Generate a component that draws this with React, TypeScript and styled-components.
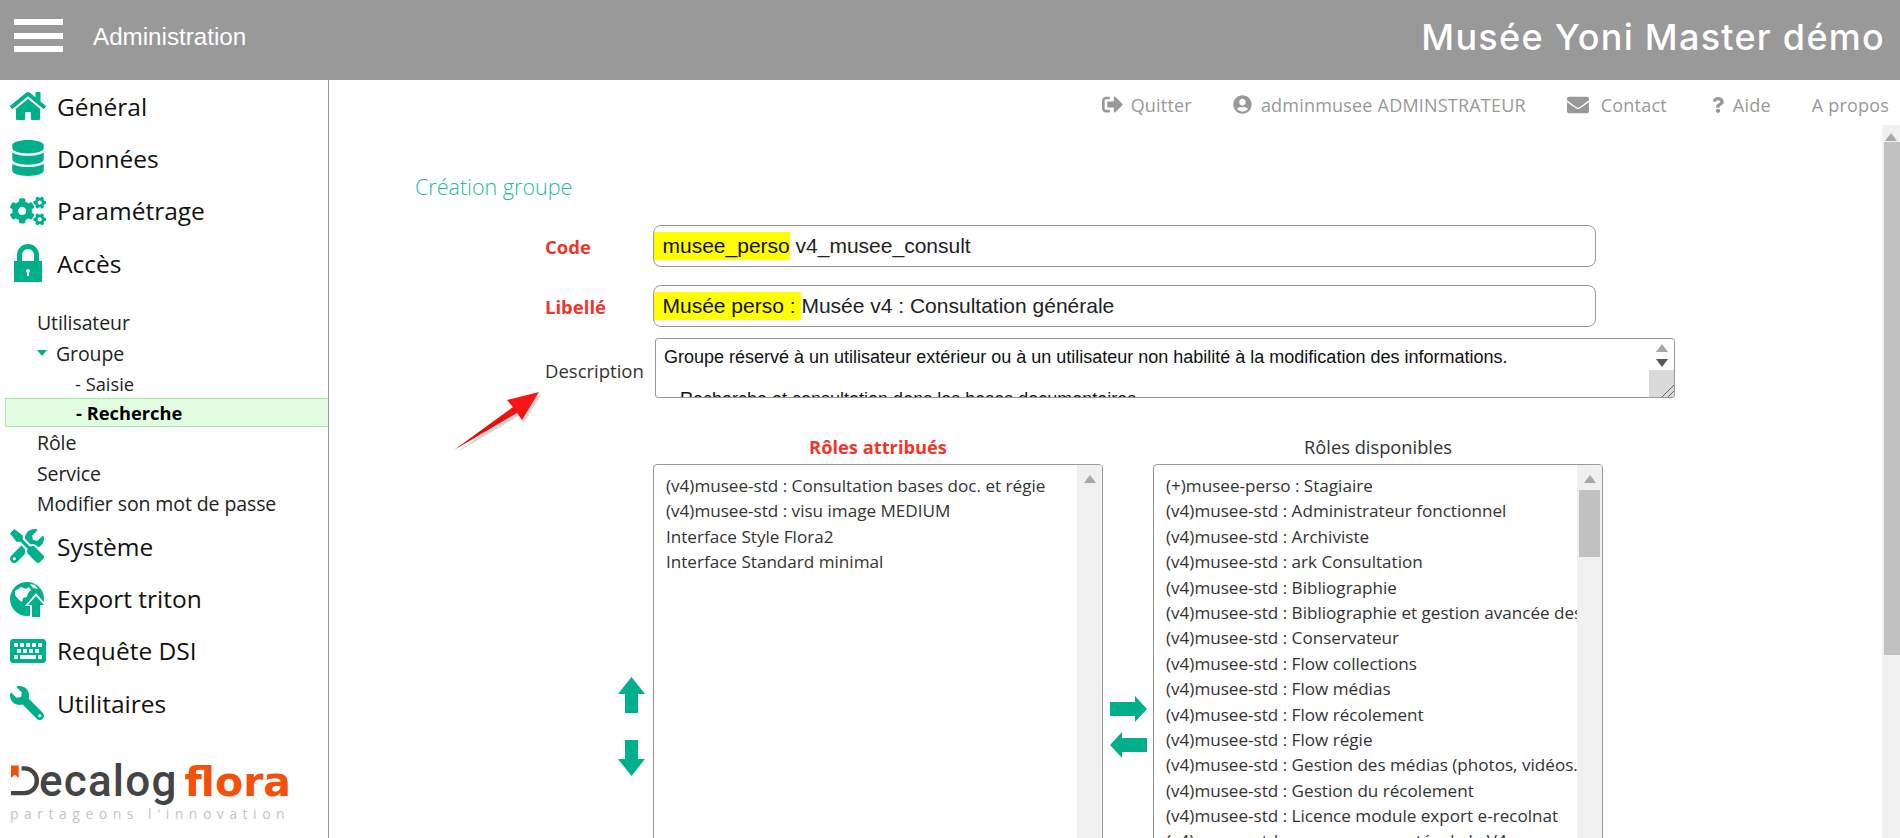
import React from "react";
import styled, { createGlobalStyle } from "styled-components";
import {
  FaHome,
  FaDatabase,
  FaCogs,
  FaTools,
  FaKeyboard,
  FaWrench,
  FaSignOutAlt,
  FaUserCircle,
  FaEnvelope,
  FaQuestion,
} from "react-icons/fa";

const TEAL = "#00b08c";
const SEGOE = `"Open Sans", "Noto Sans", sans-serif`;

const assigned = [
  "(v4)musee-std : Consultation bases doc. et régie",
  "(v4)musee-std : visu image MEDIUM",
  "Interface Style Flora2",
  "Interface Standard minimal",
];

const available = [
  "(+)musee-perso : Stagiaire",
  "(v4)musee-std : Administrateur fonctionnel",
  "(v4)musee-std : Archiviste",
  "(v4)musee-std : ark Consultation",
  "(v4)musee-std : Bibliographie",
  "(v4)musee-std : Bibliographie et gestion avancée des autorités",
  "(v4)musee-std : Conservateur",
  "(v4)musee-std : Flow collections",
  "(v4)musee-std : Flow médias",
  "(v4)musee-std : Flow récolement",
  "(v4)musee-std : Flow régie",
  "(v4)musee-std : Gestion des médias (photos, vidéos...)",
  "(v4)musee-std : Gestion du récolement",
  "(v4)musee-std : Licence module export e-recolnat",
  "(v4)musee-std : menus augmentés de la V4",
];

const GlobeUp = () => (
  <svg viewBox="0 0 36 36" width="36" height="36" fill={TEAL}>
    <circle cx="17" cy="18" r="17" />
    <path
      d="M5 10l6-4 5 2 3-2 2 3-3 3-1 4-4 1-1 4-4-3-3-4zM20 3l5 1 3 4-5-1z"
      fill="#fff"
    />
    <path d="M26 12L37 25h-5v11H20V25h-5z" fill="#fff" />
    <path d="M26 15L34 24h-4v12h-8V24h-4z" fill={TEAL} />
  </svg>
);

const PadLock = () => (
  <svg viewBox="0 0 28 38" width="28" height="38" fill={TEAL}>
    <path
      fillRule="evenodd"
      d="M0 17h3v-6a11 11 0 0 1 22 0v6h3v21H0zM8 17h12v-6a6 6 0 0 0-12 0zM14 25a2 2 0 0 0-1 3.700V32h2v-3.300A2 2 0 0 0 14 25z"
    />
  </svg>
);

const DecalogD = () => (
  <svg viewBox="0 0 30 31" width="29" height="31">
    <path d="M1 0h8v13L5 9.500 1 13z" fill="#f4500a" />
    <path
      d="M12 3h3a12.500 12.500 0 0 1 0 25.500H1"
      fill="none"
      stroke="#444"
      strokeWidth="4.500"
    />
  </svg>
);

const UpArrow = () => (
  <svg viewBox="0 0 27 36" width="27" height="36" fill={TEAL}>
    <path d="M13.500 0L27 17h-7v19H7V17H0z" />
  </svg>
);

const DownArrow = () => (
  <svg viewBox="0 0 27 36" width="27" height="36" fill={TEAL}>
    <path d="M13.500 36L27 19h-7V0H7v19H0z" />
  </svg>
);

const RightArrow = () => (
  <svg viewBox="0 0 37 26" width="37" height="26" fill={TEAL}>
    <path d="M37 13L25 0v6H0v14h25v6z" />
  </svg>
);

const LeftArrow = () => (
  <svg viewBox="0 0 37 26" width="37" height="26" fill={TEAL}>
    <path d="M0 13L12 0v6h25v14H12v6z" />
  </svg>
);

const RedPointer = () => (
  <svg viewBox="0 0 90 66" width="90" height="66">
    <defs>
      <linearGradient id="redfade" x1="0" y1="1" x2="1" y2="0">
        <stop offset="0" stopColor="#e00000" />
        <stop offset="1" stopColor="#ff1a1a" />
      </linearGradient>
    </defs>
    <path d="M3 65L62 22 56 15 88 7 71 35 66 28z" fill="#b0a8a8" opacity="0.45" transform="translate(2 3)" />
    <path d="M3 65L62 22 56 15 88 7 71 35 66 28z" fill="url(#redfade)" />
  </svg>
);

const Triangle = ({ muted }: { muted?: boolean }) => (
  <svg viewBox="0 0 12 8" width="12" height="8" fill={muted ? "#a8a8a8" : "#555"}>
    <path d="M6 0l6 8H0z" />
  </svg>
);

const TriangleDown = () => (
  <svg viewBox="0 0 12 8" width="12" height="8" fill="#555">
    <path d="M6 8L0 0h12z" />
  </svg>
);

const App = () => (
  <>
    <GlobalStyle />
    <Page>
      <Header>
        <Burger>
          <span />
          <span />
          <span />
        </Burger>
        <AppName>Administration</AppName>
        <SiteTitle>Musée Yoni Master démo</SiteTitle>
      </Header>
      <Body>
        <Sidebar>
          <Nav>
            <TopItem><IconSlot><FaHome size={36} /></IconSlot>Général</TopItem>
            <TopItem><IconSlot><FaDatabase size={36} /></IconSlot>Données</TopItem>
            <TopItem><IconSlot><FaCogs size={36} /></IconSlot>Paramétrage</TopItem>
            <TopItem><IconSlot indent={4}><PadLock /></IconSlot>Accès</TopItem>
            <SubList>
              <SubItem>Utilisateur</SubItem>
              <SubItem><Caret />Groupe</SubItem>
              <SubSubItem>- Saisie</SubSubItem>
              <SubSubItem active>- Recherche</SubSubItem>
              <SubItem>Rôle</SubItem>
              <SubItem>Service</SubItem>
              <SubItem>Modifier son mot de passe</SubItem>
            </SubList>
            <TopItem><IconSlot><FaTools size={34} /></IconSlot>Système</TopItem>
            <TopItem><IconSlot><GlobeUp /></IconSlot>Export triton</TopItem>
            <TopItem><IconSlot><FaKeyboard size={36} /></IconSlot>Requête DSI</TopItem>
            <TopItem><IconSlot flip><FaWrench size={34} /></IconSlot>Utilitaires</TopItem>
          </Nav>
          <Logo>
            <LogoRow>
              <DecalogD />
              <LogoDark>ecalog</LogoDark>
              <LogoOrange>flora</LogoOrange>
            </LogoRow>
            <LogoTagline>partageons l'innovation</LogoTagline>
          </Logo>
        </Sidebar>
        <Main>
          <TopLinks>
            <TopLink left={0} gap={8}><FaSignOutAlt size={21} />Quitter</TopLink>
            <TopLink left={41} gap={9}><FaUserCircle size={19} />adminmusee ADMINSTRATEUR</TopLink>
            <TopLink left={41} gap={12}><FaEnvelope size={22} />Contact</TopLink>
            <TopLink left={43} gap={7}><FaQuestion size={16} />Aide</TopLink>
            <TopLink left={41} gap={0}>A propos</TopLink>
          </TopLinks>
          <ContentRow>
            <Content>
              <PageTitle>Création groupe</PageTitle>
              <FieldRow>
                <FieldLabel required>Code</FieldLabel>
                <TextBox>
                  <Mark>musee_perso</Mark>&nbsp;v4_musee_consult
                </TextBox>
              </FieldRow>
              <FieldRow>
                <FieldLabel required>Libellé</FieldLabel>
                <TextBox>
                  <Mark>Musée perso :&nbsp;</Mark>Musée v4 : Consultation générale
                </TextBox>
              </FieldRow>
              <DescriptionRow>
                <DescriptionLabel>Description</DescriptionLabel>
                <PointerSlot><RedPointer /></PointerSlot>
                <TextArea>
                  <TextAreaBody>
                    <p>Groupe réservé à un utilisateur extérieur ou à un utilisateur non habilité à la modification des informations.</p>
                    <p>&nbsp;</p>
                    <p>&nbsp;- Recherche et consultation dans les bases documentaires</p>
                  </TextAreaBody>
                  <TextAreaScroll>
                    <ArrowCell><Triangle muted /></ArrowCell>
                    <ArrowCell><TriangleDown /></ArrowCell>
                    <ResizeCell>
                      <svg viewBox="0 0 12 12" width="12" height="12" stroke="#666" fill="none">
                        <path d="M0 12L12 0M6 12l6-6" />
                      </svg>
                    </ResizeCell>
                  </TextAreaScroll>
                </TextArea>
              </DescriptionRow>
              <RolesGrid>
                <MoveColumn>
                  <MoveButtons gap={27}>
                    <UpArrow />
                    <DownArrow />
                  </MoveButtons>
                </MoveColumn>
                <RolesColumn>
                  <RolesTitle required>Rôles attribués</RolesTitle>
                  <ListBox>
                    <ListItems>
                      {assigned.map((r) => <ListRow key={r}>{r}</ListRow>)}
                    </ListItems>
                    <ListScroll>
                      <ListArrow><Triangle muted /></ListArrow>
                    </ListScroll>
                  </ListBox>
                </RolesColumn>
                <TransferColumn>
                  <MoveButtons gap={10}>
                    <RightArrow />
                    <LeftArrow />
                  </MoveButtons>
                </TransferColumn>
                <RolesColumn>
                  <RolesTitle>Rôles disponibles</RolesTitle>
                  <ListBox>
                    <ListItems>
                      {available.map((r) => <ListRow key={r}>{r}</ListRow>)}
                    </ListItems>
                    <ListScroll>
                      <ListArrow><Triangle muted /></ListArrow>
                      <ListThumb />
                    </ListScroll>
                  </ListBox>
                </RolesColumn>
              </RolesGrid>
            </Content>
            <PageScroll>
              <PageArrow><Triangle muted /></PageArrow>
              <PageThumb />
            </PageScroll>
          </ContentRow>
        </Main>
      </Body>
    </Page>
  </>
);

const GlobalStyle = createGlobalStyle`
  html, body {
    margin: 0;
    height: 100%;
    overflow: hidden;
    background: #fff;
  }
  #root {
    height: 100%;
  }
  * {
    box-sizing: border-box;
  }
`;

const Page = styled.div`
  display: flex;
  flex-direction: column;
  height: 838px;
  overflow: hidden;
`;
const Header = styled.header`
  flex: 0 0 80px;
  display: flex;
  align-items: center;
  background: #999999;
  color: #fff;
  padding: 0 15px 0 14px;
`;
const Burger = styled.div`
  width: 49px;
  height: 33px;
  margin-top: -9px;
  display: flex;
  flex-direction: column;
  justify-content: space-between;
  span {
    display: block;
    height: 6px;
    background: #fff;
  }
`;
const AppName = styled.div`
  margin-left: 30px;
  margin-top: -7px;
  font: 24.200px "Liberation Sans", Arial, sans-serif;
`;
const SiteTitle = styled.div`
  margin-left: auto;
  margin-top: -7px;
  font: 500 36px Inter, "Noto Sans", sans-serif;
  letter-spacing: 1.250px;
`;
const Body = styled.div`
  flex: 1;
  display: flex;
  min-height: 0;
`;
const Sidebar = styled.aside`
  flex: 0 0 329px;
  border-right: 1px solid #999;
  display: flex;
  flex-direction: column;
  font-family: ${SEGOE};
  color: #111;
`;
const Nav = styled.nav`
  padding-top: 0;
`;
const TopItem = styled.div`
  height: 52.300px;
  display: flex;
  align-items: center;
  font-size: 24.500px;
`;
const IconSlot = styled.span<{ indent?: number; flip?: boolean }>`
  flex: 0 0 57px;
  padding-left: ${(p) => 10 + (p.indent || 0)}px;
  display: flex;
  align-items: center;
  color: ${TEAL};
  ${(p) =>
    p.flip &&
    `
    svg {
      transform: scaleX(-1);
    }
  `}
`;
const SubList = styled.div`
  padding: 18px 0 1px;
`;
const SubItem = styled.div`
  height: 30.600px;
  padding-left: 37px;
  display: flex;
  align-items: center;
  font-size: 19.500px;
  letter-spacing: -0.1px;
  color: #222;
`;
const Caret = styled.span`
  width: 0;
  height: 0;
  margin-right: 9px;
  border-left: 5.500px solid transparent;
  border-right: 5.500px solid transparent;
  border-top: 6px solid ${TEAL};
`;
const SubSubItem = styled.div<{ active?: boolean }>`
  height: 29.500px;
  padding-left: ${(p) => (p.active ? "70px" : "75px")};
  margin-left: ${(p) => (p.active ? "5px" : "0")};
  display: flex;
  align-items: center;
  font-size: 18.300px;
  color: ${(p) => (p.active ? "#000" : "#222")};
  font-weight: ${(p) => (p.active ? 700 : 400)};
  background: ${(p) => (p.active ? "#e3fde3" : "transparent")};
  border: ${(p) => (p.active ? "1px solid #a4eaa4" : "0")};
  border-right: 0;
`;
const Logo = styled.div`
  margin-top: auto;
  padding: 0 0 16px 10px;
`;
const LogoRow = styled.div`
  display: flex;
  align-items: baseline;
`;
const LogoDark = styled.span`
  font: 500 44px/32px Roboto, sans-serif;
  color: #444;
  letter-spacing: 1.200px;
`;
const LogoOrange = styled.span`
  font: 700 41px/32px "DejaVu Sans", sans-serif;
  color: #f4500a;
  margin-left: 7px;
`;
const LogoTagline = styled.div`
  margin-top: 8px;
  font: 400 14px/16px "Open Sans", sans-serif;
  letter-spacing: 5.500px;
  color: #c4c4c4;
  white-space: nowrap;
`;
const Main = styled.main`
  flex: 1;
  min-width: 0;
  display: flex;
  flex-direction: column;
`;
const TopLinks = styled.div`
  flex: 0 0 45px;
  display: flex;
  align-items: center;
  justify-content: flex-end;
  padding: 4px 11px 0 0;
  font-family: ${SEGOE};
  font-size: 18px;
  letter-spacing: 0.2px;
  color: #999;
`;
const TopLink = styled.a<{ left: number; gap: number }>`
  display: flex;
  align-items: center;
  gap: ${(p) => p.gap}px;
  margin-left: ${(p) => p.left}px;
  white-space: nowrap;
`;
const ContentRow = styled.div`
  flex: 1;
  min-height: 0;
  display: flex;
`;
const Content = styled.div`
  flex: 1;
  min-width: 0;
  overflow: hidden;
  padding-left: 86px;
  font-family: ${SEGOE};
`;
const PageTitle = styled.h1`
  margin: 48px 0 24px;
  font-size: 21.500px;
  line-height: 28px;
  font-weight: 300;
  color: #1dbb9b;
`;
const FieldRow = styled.div`
  display: flex;
  align-items: center;
  margin: 0 0 18px 130px;
`;
const FieldLabel = styled.label<{ required?: boolean }>`
  flex: 0 0 108px;
  font-size: 18.500px;
  font-weight: ${(p) => (p.required ? 700 : 400)};
  color: ${(p) => (p.required ? "#f0352b" : "#333")};
`;
const DescriptionLabel = styled(FieldLabel)`
  padding-top: 5px;
`;
const TextBox = styled.div`
  width: 943px;
  height: 42px;
  display: flex;
  align-items: center;
  border: 1.500px solid #999;
  border-radius: 8px;
  font: 21px "Liberation Sans", Arial, sans-serif;
  color: #222;
  white-space: pre;
`;
const Mark = styled.span`
  display: flex;
  align-items: center;
  height: 28px;
  padding-left: 8.500px;
  color: #111;
  background: #ffff00;
`;
const DescriptionRow = styled.div`
  position: relative;
  display: flex;
  align-items: center;
  margin: -7px 0 0 130px;
`;
const PointerSlot = styled.span`
  position: absolute;
  left: -94px;
  top: 47px;
`;
const TextArea = styled.div`
  width: 1020px;
  height: 60px;
  margin-left: 2px;
  display: flex;
  overflow: hidden;
  border: 1.500px solid #999;
  border-radius: 3px;
`;
const TextAreaBody = styled.div`
  flex: 1;
  padding: 8px 0 0 8px;
  font: 18px/21px "Liberation Sans", Arial, sans-serif;
  color: #111;
  white-space: nowrap;
  overflow: hidden;
  p {
    margin: 0;
  }
`;
const TextAreaScroll = styled.div`
  flex: 0 0 25px;
  display: flex;
  flex-direction: column;
  padding-top: 1px;
`;
const ArrowCell = styled.div`
  flex: 0 0 15px;
  display: flex;
  align-items: center;
  justify-content: center;
`;
const ResizeCell = styled.div`
  flex: 1;
  display: flex;
  align-items: flex-end;
  justify-content: flex-end;
  background: #dadada;
`;
const RolesGrid = styled.div`
  display: grid;
  grid-template-columns: 130px 450px 50px 450px;
  margin: 32px 0 0 108px;
`;
const MoveColumn = styled.div`
  padding: 247px 8px 0 0;
  display: flex;
  justify-content: flex-end;
  align-items: flex-start;
`;
const TransferColumn = styled.div`
  padding-top: 266px;
  display: flex;
  justify-content: center;
  align-items: flex-start;
`;
const MoveButtons = styled.div<{ gap: number }>`
  display: flex;
  flex-direction: column;
  gap: ${(p) => p.gap}px;
`;
const RolesColumn = styled.div`
  min-width: 0;
`;
const RolesTitle = styled.div<{ required?: boolean }>`
  height: 34px;
  padding-bottom: 1px;
  display: flex;
  align-items: center;
  justify-content: center;
  font-size: 18.300px;
  font-weight: ${(p) => (p.required ? 700 : 400)};
  color: ${(p) => (p.required ? "#f0352b" : "#333")};
`;
const ListBox = styled.div`
  height: 600px;
  display: flex;
  overflow: hidden;
  border: 1.500px solid #999;
  border-radius: 4px;
`;
const ListItems = styled.div`
  flex: 1;
  min-width: 0;
  padding: 8px 0 0 12px;
  overflow: hidden;
`;
const ListRow = styled.div`
  height: 25.400px;
  line-height: 25.400px;
  font-size: 17.100px;
  color: #333;
  white-space: nowrap;
  overflow: hidden;
`;
const ListScroll = styled.div`
  flex: 0 0 25px;
  background: #f0f0f0;
  padding-top: 10px;
`;
const ListArrow = styled.div`
  display: flex;
  justify-content: center;
  height: 15px;
`;
const ListThumb = styled.div`
  width: 21px;
  height: 67px;
  margin: 0 auto;
  background: #c1c1c1;
`;
const PageScroll = styled.div`
  flex: 0 0 18px;
  background: #f0f0f0;
`;
const PageArrow = styled.div`
  height: 17px;
  padding-top: 8px;
  display: flex;
  justify-content: center;
`;
const PageThumb = styled.div`
  width: 16px;
  height: 513px;
  margin-left: 2px;
  background: #c1c1c1;
`;

export default App;
